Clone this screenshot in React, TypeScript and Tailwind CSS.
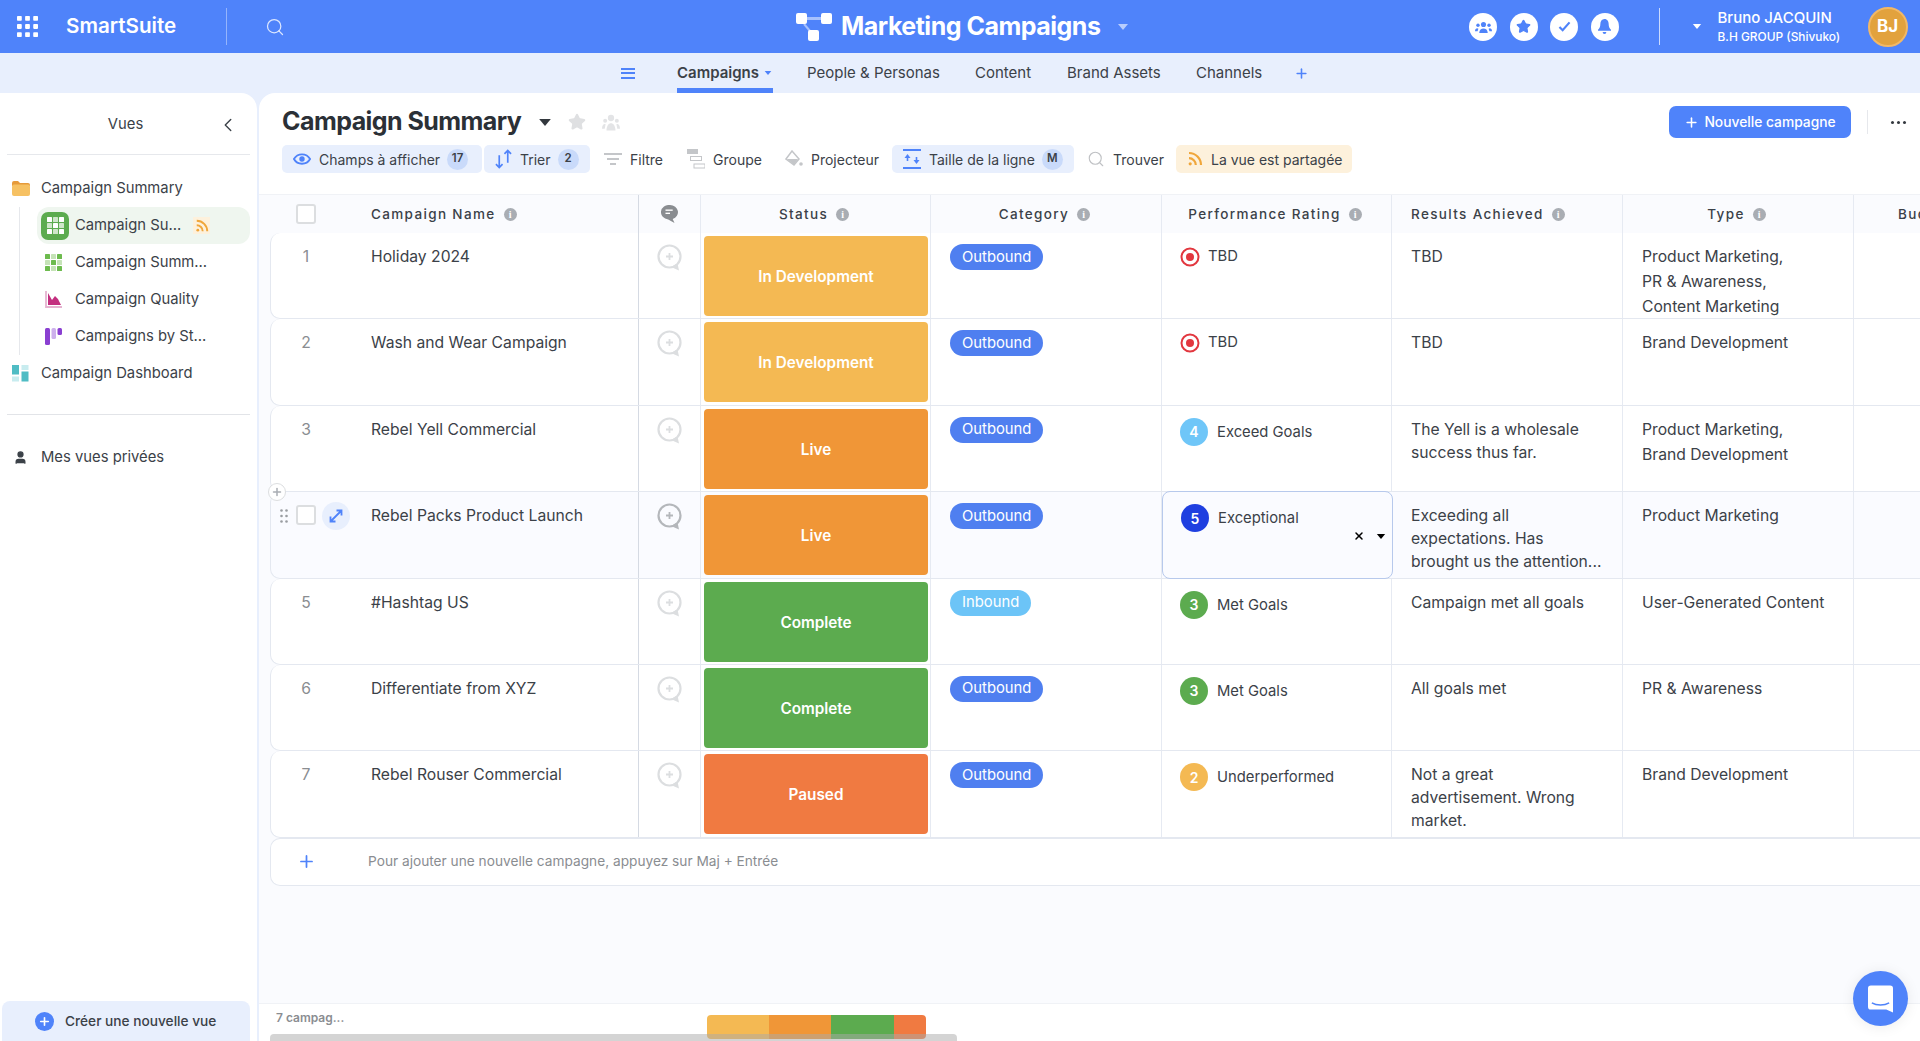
import React from "react";
import { ChevronLeft, Plus, Search, Star, User, X } from "lucide-react";

const rows = [
  { id: 1, name: "Holiday 2024", status: "In Development", category: "Outbound", rating: "t", label: "TBD", results: ["TBD"], type: ["Product Marketing,", "PR & Awareness,", "Content Marketing"] },
  { id: 2, name: "Wash and Wear Campaign", status: "In Development", category: "Outbound", rating: "t", label: "TBD", results: ["TBD"], type: ["Brand Development"] },
  { id: 3, name: "Rebel Yell Commercial", status: "Live", category: "Outbound", rating: "4", label: "Exceed Goals", results: ["The Yell is a wholesale", "success thus far."], type: ["Product Marketing,", "Brand Development"] },
  { id: 4, name: "Rebel Packs Product Launch", status: "Live", category: "Outbound", rating: "5", label: "Exceptional", results: ["Exceeding all", "expectations. Has", "brought us the attention..."], type: ["Product Marketing"] },
  { id: 5, name: "#Hashtag US", status: "Complete", category: "Inbound", rating: "3", label: "Met Goals", results: ["Campaign met all goals"], type: ["User-Generated Content"] },
  { id: 6, name: "Differentiate from XYZ", status: "Complete", category: "Outbound", rating: "3", label: "Met Goals", results: ["All goals met"], type: ["PR & Awareness"] },
  { id: 7, name: "Rebel Rouser Commercial", status: "Paused", category: "Outbound", rating: "2", label: "Underperformed", results: ["Not a great", "advertisement. Wrong", "market."], type: ["Brand Development"] },
];

const statusClass: Record<string, string> = {
  "In Development": "bg-[#f4b953]",
  Live: "bg-[#f09637]",
  Complete: "bg-[#5cab4f]",
  Paused: "bg-[#f07a41]",
};

const ratingClass: Record<string, string> = {
  "2": "bg-[#f4b953]",
  "3": "bg-[#5cab4f]",
  "4": "bg-[#6fc6f8]",
  "5": "bg-[#1f3fe0]",
};

function Info() {
  return (
    <span className="ml-2 flex h-[13px] w-[13px] shrink-0 items-center justify-center rounded-full bg-[#a9adb3] font-['Liberation_Serif',serif] text-[10px] font-bold tracking-normal text-white">
      i
    </span>
  );
}

function Caret({ className }: { className: string }) {
  return (
    <svg viewBox="0 0 10 6" className={className}>
      <path d="M0 0h10L5 6z" fill="currentColor" />
    </svg>
  );
}

function Dots() {
  const items = [0, 1, 2];
  return (
    <svg viewBox="0 0 22 22" className="h-[21px] w-[21px]" fill="#fff">
      {items.map((y) =>
        items.map((x) => <rect key={`${x}${y}`} x={x * 8.5} y={y * 8.5} width="5" height="5" rx="0.8" />)
      )}
    </svg>
  );
}

function CommentIcon({ dark }: { dark?: boolean }) {
  const c = dark ? "#b4b7bb" : "#dcdee0";
  return (
    <svg viewBox="0 0 26 28" className="h-[28px] w-[26px]" fill="none">
      <circle cx="12.5" cy="12.5" r="11" stroke={c} strokeWidth="2.2" />
      <path d="M14 23l8 3.5-1.5-7z" fill={c} />
      <path d="M12.5 9v7M9 12.5h7" stroke={c} strokeWidth="1.8" />
    </svg>
  );
}

function RssIcon({ className }: { className: string }) {
  return (
    <svg viewBox="0 0 16 16" className={className} fill="none" stroke="#f0a63a" strokeWidth="2.2">
      <circle cx="3.2" cy="12.8" r="1.6" fill="#f0a63a" stroke="none" />
      <path d="M2 7.2a6.8 6.8 0 0 1 6.8 6.8M2 2a12 12 0 0 1 12 12" />
    </svg>
  );
}

function HeaderCircle({ children }: { children: React.ReactNode }) {
  return <div className="flex h-7 w-7 items-center justify-center rounded-full bg-white">{children}</div>;
}

function TopBar() {
  return (
    <div className="flex h-[53px] shrink-0 items-center bg-[#4f83fa] text-white">
      <div className="ml-[17px] flex w-[209px] items-center">
        <Dots />
        <span className="ml-[28px] text-[20.6px] font-semibold">SmartSuite</span>
      </div>
      <div className="h-[37px] w-px bg-white/40" />
      <Search className="ml-[38px] h-[20px] w-[20px] text-white/80" strokeWidth={1.5} />
      <div className="ml-[511px] flex w-[355px] items-center">
        <svg viewBox="0 0 36 30" className="h-[30px] w-[36px]" fill="#fff">
          <rect x="0" y="1" width="11" height="11" rx="2" />
          <rect x="25" y="1" width="11" height="11" rx="2" />
          <rect x="12" y="18" width="11" height="11" rx="2" />
          <path d="M11 5h14v3H11z" opacity=".5" />
          <path d="M8 12l6 7" stroke="#fff" strokeWidth="2" opacity=".5" />
        </svg>
        <span className="ml-[9px] text-[25px] font-bold tracking-[-0.5px]">Marketing Campaigns</span>
        <Caret className="ml-[18px] h-[6px] w-[10px] text-white/60" />
      </div>
      <div className="ml-[318px] flex items-center gap-[12.5px]">
        <HeaderCircle>
          <svg viewBox="0 0 20 16" className="h-[14px] w-[17px]" fill="#4f83fa">
            <circle cx="10" cy="5" r="3" />
            <circle cx="3.5" cy="6" r="2" />
            <circle cx="16.5" cy="6" r="2" />
            <path d="M5 15c0-7 10-7 10 0zM0 13c0-4 3-4 4-3l-1 3zM20 13c0-4-3-4-4-3l1 3z" />
          </svg>
        </HeaderCircle>
        <HeaderCircle>
          <Star className="h-[15px] w-[15px] fill-[#4f83fa] text-[#4f83fa]" />
        </HeaderCircle>
        <HeaderCircle>
          <svg viewBox="0 0 14 12" className="h-[11px] w-[13px]" fill="none" stroke="#4f83fa" strokeWidth="2.4">
            <path d="M1.5 6.5l3.5 3.5 7.5-8.5" />
          </svg>
        </HeaderCircle>
        <HeaderCircle>
          <svg viewBox="0 0 14 16" className="h-[15px] w-[13px]" fill="#4f83fa">
            <path d="M7 0c3 0 4.500 2.500 4.500 5.500 0 3 1 4.500 2.500 6v1H0v-1c1.500-1.500 2.500-3 2.500-6C2.500 2.500 4 0 7 0zM5 14h4a2 2 0 0 1-4 0z" />
          </svg>
        </HeaderCircle>
      </div>
      <div className="ml-[40px] h-[37px] w-px bg-white/70" />
      <Caret className="ml-[32px] h-[5px] w-[10px] text-white" />
      <div className="-mt-px ml-[16px] flex w-[150px] flex-col gap-[2px]">
        <span className="text-[15px] leading-[19px] font-medium">Bruno JACQUIN</span>
        <span className="text-[11.9px] leading-[16px] font-medium whitespace-nowrap">B.H GROUP (Shivuko)</span>
      </div>
      <div className="flex h-10 w-10 shrink-0 items-center justify-center rounded-full border-2 border-[#f2b866] bg-[#e2a23d] text-[17px] font-bold">
        BJ
      </div>
    </div>
  );
}

function TabBar() {
  return (
    <div className="flex h-10 shrink-0 items-center bg-[#e8effd] text-[15px] text-[#3b4148]">
      <div className="ml-[621px] flex h-[11px] w-[14px] flex-col justify-between">
        <div className="h-[2px] bg-[#4f83fa]" />
        <div className="h-[2px] bg-[#4f83fa]" />
        <div className="h-[2px] bg-[#4f83fa]" />
      </div>
      <div className="relative ml-[42px] flex h-10 w-[96px] items-center font-semibold">
        Campaigns
        <Caret className="ml-[5px] h-[4px] w-[8px] text-[#4f83fa]" />
        <div className="absolute right-0 bottom-0 left-0 h-[5px] bg-[#4f83fa]" />
      </div>
      <span className="ml-[34px] w-[134px]">People &amp; Personas</span>
      <span className="ml-[34px] w-[58px]">Content</span>
      <span className="ml-[34px] w-[95px]">Brand Assets</span>
      <span className="ml-[34px] w-[68px]">Channels</span>
      <Plus className="ml-[30px] h-[15px] w-[15px] text-[#4f83fa]" strokeWidth={2.5} />
    </div>
  );
}

function GridIcon({ on, off }: { on: string; off: string }) {
  const cells = [0, 1, 2, 3, 4, 5, 6, 7, 8];
  return (
    <svg viewBox="0 0 17 17" className="h-[17px] w-[17px]">
      {cells.map((i) => (
        <rect key={i} x={(i % 3) * 6} y={Math.floor(i / 3) * 6} width="5" height="5" rx="0.6" fill={[0, 2, 4, 6, 8].includes(i) ? on : off} />
      ))}
    </svg>
  );
}

function Sidebar() {
  return (
    <div className="flex w-[257px] shrink-0 flex-col rounded-tr-[16px] bg-white text-[14.8px] whitespace-nowrap text-[#3b4148]">
      <div className="relative mx-[7px] flex h-[62px] shrink-0 items-center justify-center border-b border-[#e6e8ec] pt-[2px] pr-[6px]">
        Vues
        <ChevronLeft className="absolute right-[11px] h-[22px] w-[22px] text-[#3b4148]" strokeWidth={1.5} />
      </div>
      <div className="mt-[15px] flex h-[37px] items-center pl-[12px]">
        <svg viewBox="0 0 18 15" className="h-[15px] w-[18px]">
          <path d="M0 2a2 2 0 0 1 2-2h4l2 2h8a2 2 0 0 1 2 2v1H0z" fill="#e69a3a" />
          <rect y="3.500" width="18" height="11.500" rx="2" fill="#f6c163" />
        </svg>
        <span className="ml-[11px]">Campaign Summary</span>
      </div>
      <div className="ml-[19px] border-l border-[#e6e8ec]">
        <div className="ml-[17px] flex h-[37px] w-[213px] items-center rounded-[12px] bg-[#eff6ef] pl-[4px]">
          <div className="flex h-[28px] w-[28px] items-center justify-center rounded-[7px] bg-[#5cab4f]">
            <GridIcon on="#fff" off="#cfe6ca" />
          </div>
          <span className="ml-[6px] w-[110px]">Campaign Su...</span>
          <div className="ml-[8px] flex h-[17px] w-[17px] items-center justify-center bg-[#fdf1dc]">
            <RssIcon className="h-[14px] w-[14px]" />
          </div>
        </div>
        <div className="flex h-[37px] items-center pl-[25px]">
          <GridIcon on="#6dbb4e" off="#c5e3b7" />
          <span className="ml-[13px]">Campaign Summ...</span>
        </div>
        <div className="flex h-[37px] items-center pl-[25px]">
          <svg viewBox="0 0 17 17" className="h-[17px] w-[17px]">
            <path d="M1 0v16h16" fill="none" stroke="#e5b3d0" strokeWidth="1.8" />
            <path d="M3 14V2l4 7 3-4 3 3 3 6z" fill="#c32f7f" />
          </svg>
          <span className="ml-[13px]">Campaign Quality</span>
        </div>
        <div className="flex h-[37px] items-center pl-[25px]">
          <svg viewBox="0 0 17 17" className="h-[17px] w-[17px]">
            <rect width="5" height="17" rx="1.500" fill="#8a3fd1" />
            <rect x="6.500" width="4.500" height="11" rx="1.500" fill="#cdb0ec" />
            <rect x="12.500" width="4.500" height="7" rx="1.500" fill="#8a3fd1" />
          </svg>
          <span className="ml-[13px]">Campaigns by St...</span>
        </div>
      </div>
      <div className="flex h-[37px] items-center pl-[12px]">
        <svg viewBox="0 0 17 17" className="h-[17px] w-[17px]">
          <rect width="7" height="9.500" fill="#4fbcc4" />
          <rect x="9.500" width="7" height="5" fill="#c8ecef" />
          <rect y="11.500" width="7" height="5" fill="#c8ecef" />
          <rect x="9.500" y="6.500" width="7" height="10" fill="#4fbcc4" />
        </svg>
        <span className="ml-[12px]">Campaign Dashboard</span>
      </div>
      <div className="mx-[7px] mt-[22px] border-b border-[#e2e4e8]" />
      <div className="mt-[24px] flex h-[37px] items-center pl-[13px]">
        <User className="h-[15px] w-[15px] fill-[#3b4148] text-[#3b4148]" />
        <span className="ml-[13px]">Mes vues privées</span>
      </div>
      <div className="mt-auto ml-[2px] flex h-[40px] w-[248px] items-center rounded-t-[8px] bg-[#e8effd] pl-[33px] text-[13.7px] font-medium">
        <div className="flex h-[19px] w-[19px] items-center justify-center rounded-full bg-[#4f83fa]">
          <Plus className="h-[13px] w-[13px] text-white" strokeWidth={3} />
        </div>
        <span className="ml-[11px]">Créer une nouvelle vue</span>
      </div>
    </div>
  );
}

function ToolItem({ icon, label, count, boxed, className }: { icon: React.ReactNode; label: string; count?: string; boxed?: boolean; className: string }) {
  return (
    <div className={`flex h-[28px] items-center rounded-[5px] ${boxed ? "bg-[#e8effd]" : ""} ${className}`}>
      {icon}
      <span className="ml-[8px]">{label}</span>
      {count && (
        <span className="ml-[7px] flex h-[21px] min-w-[21px] items-center justify-center rounded-full bg-[#c9dafa] px-[4px] text-[11.5px] font-semibold">
          {count}
        </span>
      )}
    </div>
  );
}

function ViewHeader() {
  return (
    <div className="h-[101px] shrink-0">
      <div className="flex h-[52px] items-center pt-[6px] pl-[23px]">
        <span className="text-[25px] font-bold tracking-[-0.55px] text-[#2b3036]">Campaign Summary</span>
        <Caret className="ml-[18px] h-[7px] w-[12px] text-[#33383e]" />
        <Star className="ml-[17px] h-[18px] w-[18px] fill-[#dfe0e2] text-[#dfe0e2]" />
        <svg viewBox="0 0 20 18" className="ml-[16px] h-[17px] w-[18px]" fill="#e3e4e6">
          <circle cx="10" cy="4" r="3.500" />
          <circle cx="3.500" cy="7" r="2.200" />
          <circle cx="16.500" cy="7" r="2.200" />
          <path d="M5 18c0-11 10-11 10 0zM0 16c0-5 3-6 4-5l-1 5zM20 16c0-5-3-6-4-5l1 5z" />
        </svg>
        <div className="ml-auto flex h-[32px] w-[182px] items-center justify-center rounded-[7px] bg-[#4f83fa] text-[13.8px] font-medium text-white">
          <Plus className="mr-[5px] h-[15px] w-[15px]" strokeWidth={2.5} />
          Nouvelle campagne
        </div>
        <div className="ml-[16px] h-[24px] w-px bg-[#e6e8ec]" />
        <div className="mr-[14px] ml-[23px] flex gap-[3px]">
          <div className="h-[3px] w-[3px] rounded-full bg-[#33383e]" />
          <div className="h-[3px] w-[3px] rounded-full bg-[#33383e]" />
          <div className="h-[3px] w-[3px] rounded-full bg-[#33383e]" />
        </div>
      </div>
      <div className="flex items-center pl-[23px] text-[14px] whitespace-nowrap text-[#3b4148]">
        <ToolItem
          boxed
          className="w-[200px] pl-[11px]"
          label="Champs à afficher"
          count="17"
          icon={
            <svg viewBox="0 0 20 14" className="h-[14px] w-[18px]" fill="none" stroke="#4f83fa" strokeWidth="2">
              <path d="M1 7c4-7 14-7 18 0-4 7-14 7-18 0z" />
              <circle cx="10" cy="7" r="2" fill="#4f83fa" />
            </svg>
          }
        />
        <ToolItem
          boxed
          className="ml-[2px] w-[106px] pl-[11px]"
          label="Trier"
          count="2"
          icon={
            <svg viewBox="0 0 18 20" className="h-[20px] w-[17px]" fill="none" stroke="#4f83fa" strokeWidth="1.8">
              <path d="M4.500 6v13M1 15.500l3.500 3.500L8 15.500M13.500 14V1M10 4.500L13.500 1 17 4.500" />
            </svg>
          }
        />
        <ToolItem
          className="ml-[14px] w-[69px]"
          label="Filtre"
          icon={
            <svg viewBox="0 0 18 12" className="h-[12px] w-[18px]" fill="#c4c6c9">
              <rect width="18" height="2" />
              <rect x="3" y="5" width="12" height="2" />
              <rect x="6" y="10" width="6" height="2" />
            </svg>
          }
        />
        <ToolItem
          className="ml-[14px] w-[85px]"
          label="Groupe"
          icon={
            <svg viewBox="0 0 18 20" className="h-[20px] w-[18px]">
              <rect width="11" height="5" fill="#c4c6c9" />
              <rect x="3.500" y="7.500" width="11" height="4" fill="none" stroke="#c4c6c9" />
              <rect x="7" y="15" width="11" height="4" fill="none" stroke="#c4c6c9" />
            </svg>
          }
        />
        <ToolItem
          className="ml-[13px] w-[107px]"
          label="Projecteur"
          icon={
            <svg viewBox="0 0 18 18" className="h-[18px] w-[18px]">
              <path d="M7 1l7 8-5 6-8-6z" fill="none" stroke="#c4c6c9" strokeWidth="1.500" />
              <path d="M2 9h11l-4 6z" fill="#c4c6c9" />
              <circle cx="16" cy="14" r="1.800" fill="#c4c6c9" />
            </svg>
          }
        />
        <ToolItem
          boxed
          className="w-[182px] pl-[11px]"
          label="Taille de la ligne"
          count="M"
          icon={
            <svg viewBox="0 0 18 20" className="h-[20px] w-[18px]">
              <rect width="18" height="2" fill="#4f83fa" />
              <rect y="18" width="18" height="2" fill="#4f83fa" />
              <path d="M4.500 5l3 4h-6zM13.500 15l-3-4h6z" fill="#4f83fa" />
              <path d="M3.700 8v4h1.600V8zM12.700 8v4h1.600V8z" fill="#4f83fa" />
            </svg>
          }
        />
        <ToolItem
          className="ml-[13px] w-[89px]"
          label="Trouver"
          icon={<Search className="h-[18px] w-[18px] text-[#bfc1c4]" strokeWidth={1.5} />}
        />
        <ToolItem
          boxed
          className="w-[176px] bg-[#fdf1dc]! pl-[11px]"
          label="La vue est partagée"
          icon={<RssIcon className="h-[16px] w-[16px]" />}
        />
      </div>
    </div>
  );
}

function HeadCell({ label, className }: { label: string; className: string }) {
  return (
    <div className={`flex h-full shrink-0 items-center border-r border-[#e6eaf2] ${className}`}>
      {label}
      <Info />
    </div>
  );
}

function TableHead() {
  return (
    <div className="flex h-[39px] shrink-0 items-center border-t border-[#f0f2f6] pl-[11px] text-[13.5px] font-medium tracking-[1.35px] whitespace-nowrap text-[#3b4148]">
      <div className="flex h-full w-[369px] shrink-0 items-center border-r border-[#d5dae3]">
        <div className="ml-[26px] h-[20px] w-[20px] rounded-[3px] border-2 border-[#dcdee0] bg-white" />
        <div className="ml-[55px] flex items-center">
          Campaign Name
          <Info />
        </div>
      </div>
      <div className="flex h-full w-[62px] shrink-0 items-center justify-center border-r border-[#e6eaf2]">
        <svg viewBox="0 0 20 20" className="h-[18px] w-[18px]" fill="#8a8d91">
          <path d="M10 0a9 8 0 0 1 3 15.500L15 20l-7-4A9 8 0 0 1 10 0z" />
          <rect x="5" y="5" width="8" height="1.500" fill="#fff" />
          <rect x="5" y="8.500" width="5" height="1.500" fill="#fff" />
        </svg>
      </div>
      <HeadCell label="Status" className="w-[230px] justify-center pr-[3px]" />
      <HeadCell label="Category" className="w-[231px] justify-center pr-[3px]" />
      <HeadCell label="Performance Rating" className="w-[230px] justify-center pr-[3px]" />
      <HeadCell label="Results Achieved" className="w-[231px] pl-[19px]" />
      <HeadCell label="Type" className="w-[231px] justify-center pr-[3px]" />
      <div className="shrink-0 pl-[44px]">Bud</div>
    </div>
  );
}

function Row({ row }: { row: (typeof rows)[number] }) {
  const active = row.id === 4;
  return (
    <div className={`flex h-[86.4px] shrink-0 rounded-l-[10px] border-b border-l border-[#e4e8f0] text-[15.7px] leading-[23px] text-[#3b4148] ${active ? "bg-[#fafbff]" : "bg-white"}`}>
      <div className="relative flex w-[368px] shrink-0 border-r border-[#d5dae3] pt-[12px]">
        {active ? (
          <div className="flex w-[100px] items-start">
            <svg viewBox="0 0 8 14" className="mt-[5px] ml-[9px] h-[14px] w-[8px]" fill="#9a9da1">
              <circle cx="1.500" cy="1.500" r="1.300" />
              <circle cx="6.500" cy="1.500" r="1.300" />
              <circle cx="1.500" cy="7" r="1.300" />
              <circle cx="6.500" cy="7" r="1.300" />
              <circle cx="1.500" cy="12.500" r="1.300" />
              <circle cx="6.500" cy="12.500" r="1.300" />
            </svg>
            <div className="mt-[1px] ml-[8px] h-[20px] w-[20px] rounded-[3px] border-2 border-[#dcdee0] bg-white" />
            <div className="-mt-[2px] ml-[6px] flex h-[28px] w-[28px] items-center justify-center rounded-full bg-[#e8effd]">
              <svg viewBox="0 0 14 14" className="h-[14px] w-[14px]" fill="none" stroke="#4f83fa" strokeWidth="1.800">
                <path d="M2 12L12 2M7.500 1.500h5v5M1.500 7.500v5h5" />
              </svg>
            </div>
          </div>
        ) : (
          <div className="w-[100px] pl-[2px] text-center text-[#8a8d91]">
            <span className="mr-[32px]">{row.id}</span>
          </div>
        )}
        <span>{row.name}</span>
        {active && (
          <div className="absolute -top-[9px] -left-[3px] flex h-[18px] w-[18px] items-center justify-center rounded-full border border-[#dcdee0] bg-white">
            <Plus className="h-[12px] w-[12px] text-[#a9adb3]" strokeWidth={3} />
          </div>
        )}
      </div>
      <div className="flex w-[62px] shrink-0 justify-center border-r border-[#e6eaf2] pt-[11px]">
        <CommentIcon dark={active} />
      </div>
      <div className="w-[230px] shrink-0 border-r border-[#e6eaf2] py-[3px] pr-[2px] pl-[3px]">
        <div className={`flex h-[80px] items-center justify-center rounded-[4px] pt-[1px] text-[15.3px] font-semibold text-white ${statusClass[row.status]}`}>
          {row.status}
        </div>
      </div>
      <div className="w-[231px] shrink-0 border-r border-[#e6eaf2] pt-[11px] pl-[19px]">
        <span className={`inline-flex h-[26px] items-center rounded-full px-[12px] text-[14.8px] text-white ${row.category === "Inbound" ? "bg-[#6cc4f7]" : "bg-[#4f7ff0]"}`}>
          {row.category}
        </span>
      </div>
      <div className={`relative flex shrink-0 items-start pt-[12px] pl-[18px] text-[14.8px] ${active ? "-mt-px -mr-px -mb-px w-[231px] rounded-[8px] border border-[#b7c9ec]" : "w-[230px] border-r border-[#e6eaf2]"}`}>
        {row.rating === "t" ? (
          <>
            <svg viewBox="0 0 20 20" className="mt-[2px] h-[20px] w-[20px]" fill="none">
              <circle cx="10" cy="10" r="8.500" stroke="#e2373f" strokeWidth="2" />
              <circle cx="10" cy="10" r="4" fill="#e2373f" />
            </svg>
            <span className="ml-[8px]">{row.label}</span>
          </>
        ) : (
          <>
            <div className={`flex h-[28px] w-[28px] shrink-0 items-center justify-center rounded-full text-[14px] font-semibold text-white ${ratingClass[row.rating]}`}>
              {row.rating}
            </div>
            <span className="mt-[3px] ml-[9px]">{row.label}</span>
          </>
        )}
        {active && (
          <div className="absolute top-[38px] right-[6px] flex items-center gap-[11px] text-black">
            <X className="h-[12px] w-[12px]" strokeWidth={3} />
            <Caret className="h-[5px] w-[10px]" />
          </div>
        )}
      </div>
      <div className="w-[231px] shrink-0 border-r border-[#e6eaf2] pt-[12px] pl-[19px]">
        {row.results.map((line) => (
          <div key={line}>{line}</div>
        ))}
      </div>
      <div className="w-[231px] shrink-0 border-r border-[#e6eaf2] pt-[11px] pl-[19px] leading-[25px]">
        {row.type.map((line) => (
          <div key={line}>{line}</div>
        ))}
      </div>
      <div className="w-[200px] shrink-0" />
    </div>
  );
}

function TableFooter() {
  return (
    <div className="relative flex h-[38px] shrink-0 items-start border-t border-[#f0f2f6] bg-white pt-[5px] pl-[17px] text-[12px] font-semibold text-[#8a8d91]">
      <span className="w-[431px]">7 campag...</span>
      <div className="mt-[6px] flex h-[24px] w-[219px] overflow-hidden rounded-[4px]">
        <div className="w-[62px] bg-[#f4b953]" />
        <div className="w-[62px] bg-[#f09637]" />
        <div className="w-[63px] bg-[#5cab4f]" />
        <div className="w-[32px] bg-[#f07a41]" />
      </div>
      <div className="absolute bottom-0 left-[11px] h-[7px] w-[687px] rounded-t-[4px] bg-[#a9a9a9]/50" />
    </div>
  );
}

export default function App() {
  return (
    <div className="relative flex h-screen flex-col overflow-hidden bg-[#e8effd] font-['Inter',sans-serif]">
      <TopBar />
      <TabBar />
      <div className="flex min-h-0 flex-1 gap-[2px]">
        <Sidebar />
        <div className="flex min-w-0 flex-1 flex-col overflow-hidden rounded-tl-[16px] bg-white">
          <ViewHeader />
          <div className="flex min-h-0 flex-1 flex-col bg-[#fafbfe]">
            <TableHead />
            <div className="ml-[11px] flex w-[1700px] flex-col whitespace-nowrap">
              {rows.map((row) => (
                <Row key={row.id} row={row} />
              ))}
              <div className="flex h-[48px] shrink-0 items-center rounded-l-[10px] border-y border-l border-[#e4e8f0] bg-white">
                <Plus className="ml-[26px] h-[19px] w-[19px] text-[#4f83fa]" strokeWidth={2.2} />
                <span className="ml-[52px] text-[13.7px] text-[#8a8d91]">Pour ajouter une nouvelle campagne, appuyez sur Maj + Entrée</span>
              </div>
            </div>
          </div>
          <TableFooter />
        </div>
      </div>
      <div className="absolute top-[971px] left-[1853px] flex h-[55px] w-[55px] items-center justify-center rounded-full bg-[#4f83fa] shadow-[0_1px_14px_rgba(0,0,0,0.08)]">
        <svg viewBox="0 0 26 28" className="h-[28px] w-[25px]">
          <path d="M3 0h20a3 3 0 0 1 3 3v25l-7-3H3a3 3 0 0 1-3-3V3a3 3 0 0 1 3-3z" fill="#fff" />
          <path d="M4 18c5 3 13 3 18 0" fill="none" stroke="#4f83fa" strokeWidth="1.500" />
        </svg>
      </div>
    </div>
  );
}
